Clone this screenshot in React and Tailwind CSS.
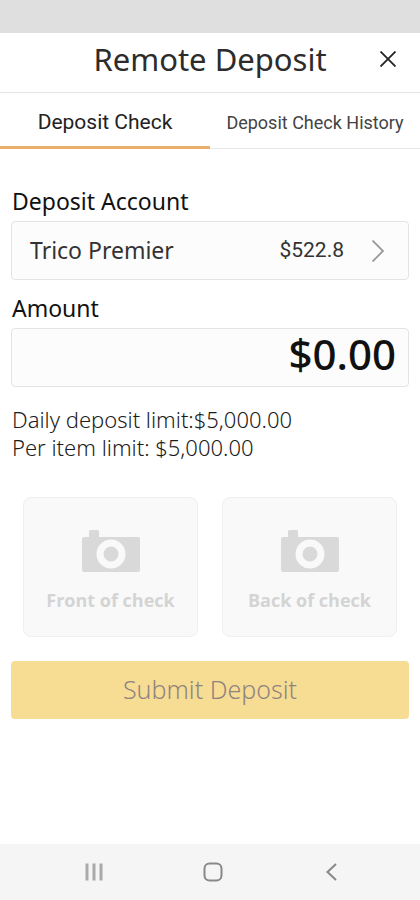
import React, { useState } from "react"

const TABS = [
  { id: "check", label: "Deposit Check", size: "text-[21px]" },
  { id: "history", label: "Deposit Check History", size: "text-[18px]" },
]

const SIDES = ["Front of check", "Back of check"]

const CameraIcon = () => (
  <svg width="58" height="42" viewBox="0 0 58 42" fill="none" aria-hidden="true">
    <path
      d="M2 7h5V1.500q0-1.500 1.500-1.500h7q1.500 0 1.500 1.500V7h39q2 0 2 2v31q0 2-2 2H2q-2 0-2-2V9q0-2 2-2z"
      fill="#d9d9d9"
    />
    <circle cx="29" cy="24" r="11" stroke="#f9f9f9" strokeWidth="7" />
  </svg>
)

const App = () => {
  const [tab, setTab] = useState("check")
  const [amount, setAmount] = useState("$0.00")

  return (
    <div className="flex min-h-screen flex-col bg-white font-['Noto_Sans',sans-serif] text-[#1c1c1c]">
      {/* status bar */}
      <div className="h-[33px] bg-[#dfdfdf]" />

      <header className="grid h-[60px] grid-cols-[44px_1fr_44px] items-center border-b border-[#e4e4e4] pb-2">
        <h1 className="col-start-2 text-center text-[31px] leading-10 whitespace-nowrap text-[#2c2c2c]">
          Remote Deposit
        </h1>
        <button type="button" aria-label="Close" className="flex justify-center pr-5">
          <svg width="16" height="16" viewBox="0 0 16 16" className="shrink-0" stroke="#222" strokeWidth="1.8">
            <path d="M0.500 0.500l15 15M15.500 0.500l-15 15" />
          </svg>
        </button>
      </header>

      <nav className="flex h-14 font-[Roboto,sans-serif]">
        {TABS.map((t) => (
          <button
            key={t.id}
            type="button"
            onClick={() => setTab(t.id)}
            className={`flex-1 whitespace-nowrap ${t.size} ${
              tab === t.id
                ? "border-b-3 border-[#e8b06a] pt-1.5 text-[#222]"
                : "border-b border-[#e8e8e8] pt-1 text-[#444]"
            }`}
          >
            {t.label}
          </button>
        ))}
      </nav>

      <main className="flex flex-col px-[11px] pt-9">
        <label htmlFor="account" className="mb-1 pl-px text-[23px] leading-8 text-[#111]">
          Deposit Account
        </label>
        <button
          id="account"
          type="button"
          className="flex h-[59px] items-center rounded-sm border border-[#e4e4e4] bg-[#fcfcfc] pr-6 pl-[18px] text-[#333]"
        >
          <span className="flex-1 text-left text-[23px]">Trico Premier</span>
          <span className="mr-7 font-[Roboto,sans-serif] text-[21px]">$522.8</span>
          <svg width="12" height="22" viewBox="0 0 12 22" fill="none" stroke="#999" strokeWidth="1.800">
            <path d="M0.500 0.500L11 11L0.500 21.500" />
          </svg>
        </button>

        <label htmlFor="amount" className="mt-3 mb-1 pl-px text-[23px] leading-8 text-[#111]">
          Amount
        </label>
        <input
          id="amount"
          type="text"
          inputMode="decimal"
          value={amount}
          onChange={(e) => setAmount(e.target.value)}
          className="h-[59px] w-full rounded-sm border border-[#e4e4e4] bg-[#fcfcfc] px-3 pb-2 text-right text-[42px] font-medium text-[#111]"
        />

        <div className="mt-[18px] pl-px text-[22px] leading-7 font-light">
          <p>Daily deposit limit:$5,000.00</p>
          <p>Per item limit: $5,000.00</p>
        </div>

        <div className="mt-9 grid grid-cols-2 gap-6 px-3">
          {SIDES.map((side) => (
            <button
              key={side}
              type="button"
              className="flex h-[140px] flex-col items-center rounded-lg border border-[#efefef] bg-[#f9f9f9] pt-8 font-['Open_Sans',sans-serif] text-[18px] font-bold text-[#d4d4d4]"
            >
              <CameraIcon />
              <span className="mt-3.5 leading-7">{side}</span>
            </button>
          ))}
        </div>

        <button
          type="button"
          className="mt-6 mb-6 h-[58px] rounded-sm bg-[#f7dc94] text-[25px] font-light text-[#8f8580]"
        >
          Submit Deposit
        </button>
      </main>

      {/* system navigation */}
      <footer className="mt-auto flex h-14 items-center justify-center gap-[100px] bg-[#f5f5f5] pl-1.5">
        <button type="button" aria-label="Recent apps">
          <svg width="18" height="18" viewBox="0 0 18 18" stroke="#aaa" strokeWidth="3">
            <path d="M2 0.500v17M9 0.500v17M16 0.500v17" />
          </svg>
        </button>
        <button type="button" aria-label="Home">
          <svg width="20" height="20" viewBox="0 0 20 20" fill="none" stroke="#888" strokeWidth="2">
            <rect x="1.500" y="1.500" width="17" height="17" rx="5" />
          </svg>
        </button>
        <button type="button" aria-label="Back">
          <svg width="18" height="18" viewBox="0 0 18 18" fill="none" stroke="#888" strokeWidth="2">
            <path d="M13 1L4.500 9L13 17" />
          </svg>
        </button>
      </footer>
    </div>
  )
}

export default App
